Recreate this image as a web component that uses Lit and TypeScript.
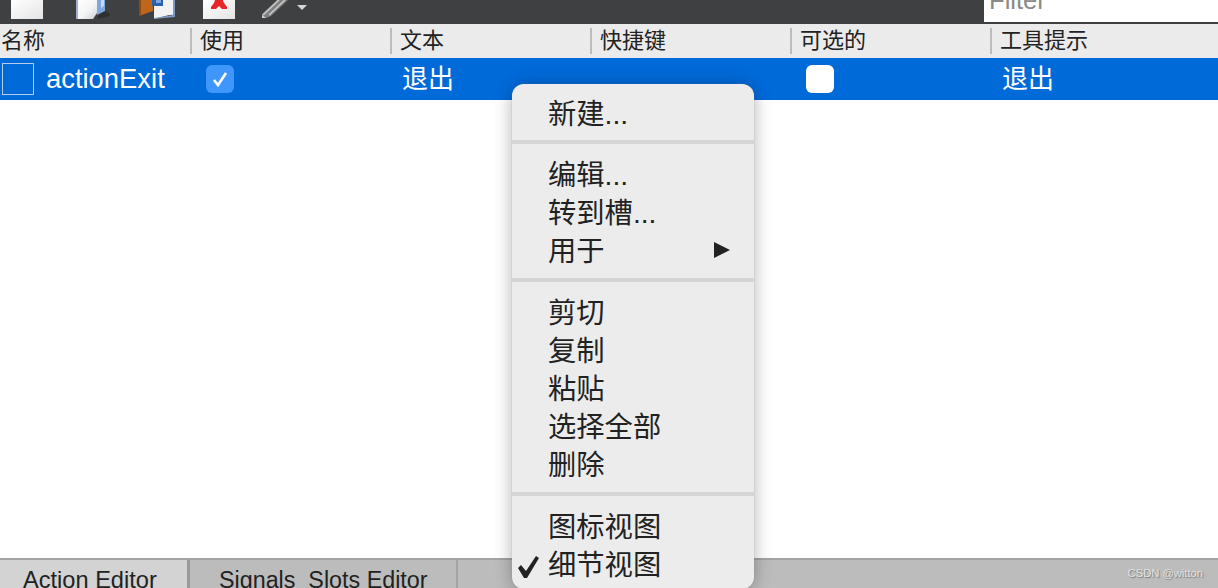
import { LitElement, html, css, svg } from "lit";
import { customElement } from "lit/decorators.js";

const ICON_NEW = svg`<svg class="tool" style="margin-left:11px" width="32" height="19" viewBox="0 0 32 19"><defs><linearGradient id="g1" x1="0" y1="0" x2="1" y2="1"><stop offset="0" stop-color="#fff"/><stop offset="1" stop-color="#e4e4e4"/></linearGradient><linearGradient id="g2" x1="0" y1="0" x2="1" y2="1"><stop offset="0" stop-color="#fff"/><stop offset="0.55" stop-color="#f4f4f4"/><stop offset="1" stop-color="#c9cfd8"/></linearGradient></defs><rect width="32" height="19" fill="url(#g1)"/></svg>`;
const ICON_OPEN = svg`<svg class="tool" style="margin-left:33px" width="36" height="19" viewBox="0 0 36 19"><path d="M21 13l9-2 4 3v2l-12 3z" fill="#2a2a2a" opacity=".8"/><path d="M21 0h8v11l-8 4z" fill="#7fa7e0"/><path d="M25 0h3v6l-3 2z" fill="#c5d9f5"/><path d="M1 0h20v13l-4 6H1z" fill="url(#g2)"/><path d="M0 0h2v19H0z" fill="#9fb2cf"/></svg>`;
const ICON_SAVE = svg`<svg class="tool" style="margin-left:27px" width="37" height="19" viewBox="0 0 37 19"><path d="M0 0h14v11L0 16z" fill="#c0661c"/><path d="M0 0h2v16H0z" fill="#8f4a12"/><path d="M15 5h21v10H15z" fill="url(#g2)"/><path d="M15 19V6l4-1V0h15v14z" fill="#f2f2f2"/><rect x="13" y="0" width="11" height="6" fill="#2b5fb0"/><rect x="17" y="0" width="5" height="3" fill="#7fa4dc"/><path d="M34 0h2v17l-21 2v-1l19-3z" fill="#7d99c6"/></svg>`;
const ICON_CUT = svg`<svg class="tool" style="margin-left:27px" width="32" height="19" viewBox="0 0 32 19"><rect width="32" height="19" fill="url(#g1)"/><path d="M12 0h8v1l1 2 3 4v2h-5l-3-3-3 3H8V7l3-4z" fill="#e8262a"/></svg>`;
const ICON_EDIT = svg`<svg class="tool" style="margin-left:27px" width="26" height="19" viewBox="0 0 26 19"><path d="M0 14L15 0h11L9 16 4 18H0z" fill="#7f7f7f"/><path d="M1 15L17 0M7 15L23 0" stroke="#c9c9c9" stroke-width="1.6" fill="none"/><path d="M0 15l4 3H0z" fill="#d2d2d2"/></svg>`;

@customElement("app-root")
export class AppRoot extends LitElement {
  static styles = css`
    :host {
      display: block;
      position: relative;
      width: 1218px;
      height: 588px;
      overflow: hidden;
      background: #fff;
      font-family: "Liberation Sans", "Noto Sans CJK SC", sans-serif;
      color: #222;
    }
    .page { display: flex; flex-direction: column; height: 588px; }
    .toolbar {
      flex: none; height: 24px; background: #3f4042;
      display: flex; align-items: flex-start;
    }
    .tool { display: block; flex: none; }
    .caret {
      flex: none; width: 0; height: 0; margin: 5px 0 0 9px;
      border-left: 5px solid transparent; border-right: 5px solid transparent;
      border-top: 5px solid #d8d8d8;
    }
    .filter {
      margin-left: auto; width: 234px; height: 22px; background: #fff;
      overflow: hidden; box-sizing: border-box;
      padding-left: 5px; font-size: 25.6px; line-height: 1px; color: #8a8a8a;
    }
    .head {
      flex: none; height: 34px; background: #ebebeb;
      display: grid; grid-template-columns: 190px repeat(4, 200px) 1fr;
      align-items: center; font-size: 22px;
    }
    .head div {
      height: 26px; line-height: 26px; box-sizing: border-box;
      border-left: 2px solid #bdbdbd; padding-left: 8px; white-space: nowrap;
    }
    .head div:first-child { border-left: 0; padding-left: 1px; }
    .row {
      flex: none; height: 42px; background: #006ad9; color: #fff;
      display: grid; grid-template-columns: 200px repeat(4, 200px) 1fr;
      align-items: center; font-size: 26px;
    }
    .name { display: flex; align-items: center; padding-left: 2px; }
    .ibox { width: 32px; height: 32px; box-sizing: border-box; border: 1px solid #b5cdec; flex: none; }
    .aname { margin-left: 12px; font-size: 27.4px; }
    .cell { padding-left: 2px; line-height: 42px; }
    .cb {
      margin-left: 4px; width: 28px; height: 28px; border-radius: 6px;
      background: #3f97fb; display: flex; align-items: center; justify-content: center;
    }
    .cb.off { background: #fff; }
    .spacer { flex: 1; }
    .tabs {
      flex: none; height: 30px; box-sizing: border-box; background: #bcbcbc;
      border-top: 2px solid #a3a3a3; display: flex; font-size: 23.6px; overflow: hidden;
    }
    .tab { line-height: 41px; height: 40px; white-space: nowrap; }
    .tab.active { width: 187px; padding-left: 23px; box-sizing: border-box; background: #d3d3d3; }
    .tab.other { width: 271px; box-sizing: border-box; padding-left: 29px; font-size: 23.3px; border-left: 3px solid #999; border-right: 2px solid #a3a3a3; }
    .mark {
      position: absolute; right: 15px; bottom: 8px; font-size: 11.2px; line-height: 13px;
      color: #e2e2e2; text-shadow: 1px 1px 1px #777;
    }
    .menu {
      position: absolute; left: 512px; top: 84px; width: 242px; height: 505px;
      box-sizing: border-box; padding-top: 10px; background: #ececec; border-radius: 12px;
      box-shadow: 0 0 1px #8a8a8a, 0 2px 18px rgba(0, 0, 0, 0.3);
      font-size: 28.3px;
    }
    .mi { position: relative; height: 38px; line-height: 40px; padding-left: 36px; white-space: nowrap; }
    .sep { height: 4px; background: #d5d5d5; margin: 9px 0 11px; }
    .sep.tight { margin-top: 8px; }
    .arrow {
      position: absolute; left: 202px; top: 11px; width: 0; height: 0;
      border-left: 16px solid #222; border-top: 8px solid transparent; border-bottom: 8px solid transparent;
    }
    .check { position: absolute; left: 5px; top: 10px; }
  `;

  render() {
    const group = (items: string[]) => items.map((t) => html`<div class="mi">${t}</div>`);
    return html`
      <div class="page">
        <div class="toolbar">
          ${ICON_NEW}${ICON_OPEN}${ICON_SAVE}${ICON_CUT}${ICON_EDIT}
          <div class="caret"></div>
          <div class="filter">Filter</div>
        </div>
        <div class="head">
          <div>名称</div><div>使用</div><div>文本</div><div>快捷键</div><div>可选的</div><div>工具提示</div>
        </div>
        <div class="row">
          <div class="name"><div class="ibox"></div><span class="aname">actionExit</span></div>
          <div class="cell"><div class="cb">
            <svg width="18" height="18" viewBox="0 0 18 18"><path d="M3 10l4 5 8-12" fill="none" stroke="#fff" stroke-width="2.6"/></svg>
          </div></div>
          <div class="cell">退出</div>
          <div class="cell"></div>
          <div class="cell"><div class="cb off"></div></div>
          <div class="cell">退出</div>
        </div>
        <div class="spacer"></div>
        <div class="tabs">
          <div class="tab active">Action Editor</div>
          <div class="tab other">Signals_Slots Editor</div>
        </div>
      </div>
      <div class="mark">CSDN @witton</div>
      <div class="menu">
        ${group(["新建..."])}
        <div class="sep tight"></div>
        ${group(["编辑...", "转到槽..."])}
        <div class="mi">用于<span class="arrow"></span></div>
        <div class="sep"></div>
        ${group(["剪切", "复制", "粘贴", "选择全部", "删除"])}
        <div class="sep"></div>
        ${group(["图标视图"])}
        <div class="mi">
          <svg class="check" width="24" height="24" viewBox="0 0 24 24"><path d="M1 13l3-3 5 6L19 1l3 2-12 20H7z" fill="#222"/></svg>
          细节视图
        </div>
      </div>
    `;
  }
}
